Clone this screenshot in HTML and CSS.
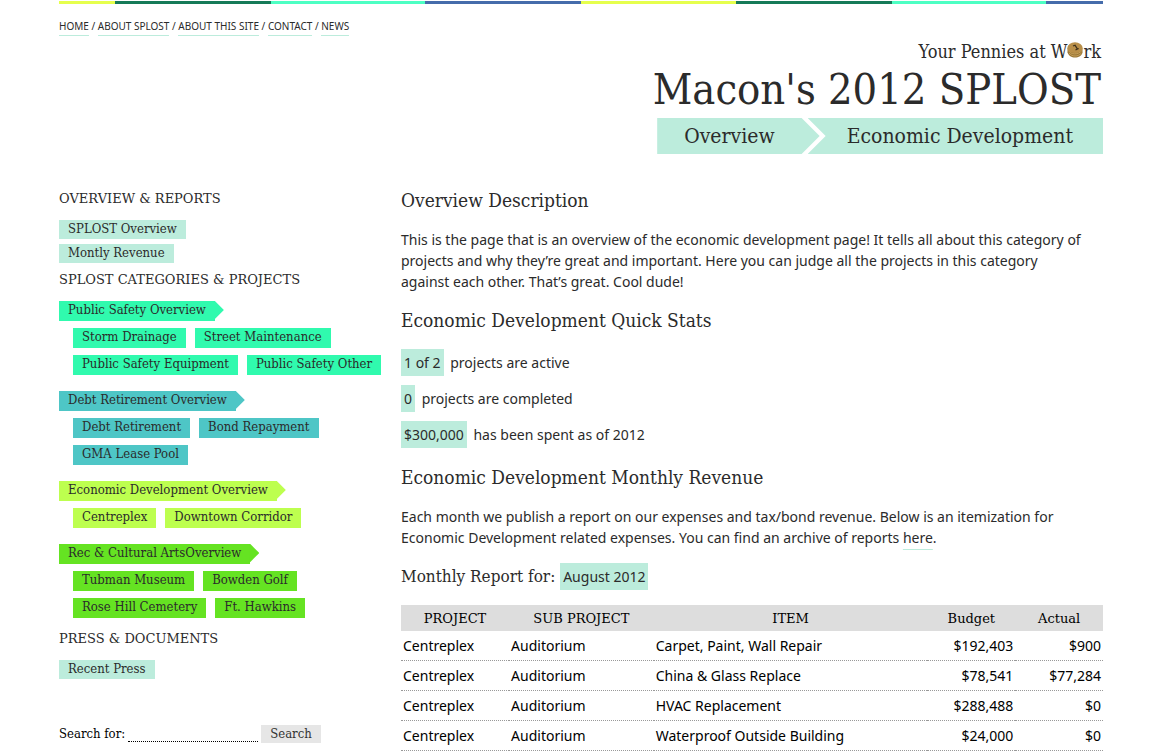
FILE: index.html
```html
<!DOCTYPE html>
<html lang="en">
<head>
<meta charset="utf-8">
<title>Macon's 2012 SPLOST</title>
<link rel="stylesheet" href="styles.css">
</head>
<body>
<div class="page">
  <div class="stripe"></div>
  <nav class="topnav">
    <a href="#">HOME</a> / <a href="#">ABOUT SPLOST</a> / <a href="#">ABOUT THIS SITE</a> / <a href="#">CONTACT</a> / <a href="#">NEWS</a>
  </nav>
  <header class="masthead">
    <p class="tagline">Your Pennies at W<svg class="coin" viewBox="0 0 16 16" aria-hidden="true"><path d="M.500 6v4.500c1 3 4 5 7.500 5s7-2 7.500-5V6z" fill="#9a7737"/><path d="M1.500 8.500c2 4 9 5 13.500 0M2 11c3 4 9 4 12.500 0" fill="none" stroke="#d0aa62" stroke-width=".8"/><ellipse cx="8" cy="5.700" rx="7.600" ry="5.400" fill="#b98f49"/><path d="M6 4l2-.8 2.500 4M8.500 8l3.200-1.500" fill="none" stroke="#3d301b" stroke-width="1.300"/></svg>rk</p>
    <h1 class="title">Macon's 2012 SPLOST</h1>
    <div class="crumbs">
      <a class="crumb crumb-first" href="#">Overview</a>
      <a class="crumb crumb-last" href="#">Economic Development</a>
    </div>
  </header>
  <div class="columns">
    <aside class="sidebar">
      <h2 class="side-title">OVERVIEW &amp; REPORTS</h2>
      <div class="stack">
        <a class="tag" href="#">SPLOST Overview</a>
        <a class="tag" href="#">Montly Revenue</a>
      </div>
      <h2 class="side-title">SPLOST CATEGORIES &amp; PROJECTS</h2>
      <section class="group safety">
        <a class="lead" href="#"><span class="tag">Public Safety Overview</span></a>
        <div class="subs">
          <a class="tag" href="#">Storm Drainage</a>
          <a class="tag" href="#">Street Maintenance</a>
          <a class="tag" href="#">Public Safety Equipment</a>
          <a class="tag" href="#">Public Safety Other</a>
        </div>
      </section>
      <section class="group debt">
        <a class="lead" href="#"><span class="tag">Debt Retirement Overview</span></a>
        <div class="subs">
          <a class="tag" href="#">Debt Retirement</a>
          <a class="tag" href="#">Bond Repayment</a>
          <a class="tag" href="#">GMA Lease Pool</a>
        </div>
      </section>
      <section class="group economic">
        <a class="lead" href="#"><span class="tag">Economic Development Overview</span></a>
        <div class="subs">
          <a class="tag" href="#">Centreplex</a>
          <a class="tag" href="#">Downtown Corridor</a>
        </div>
      </section>
      <section class="group arts">
        <a class="lead" href="#"><span class="tag">Rec &amp; Cultural ArtsOverview</span></a>
        <div class="subs">
          <a class="tag" href="#">Tubman Museum</a>
          <a class="tag" href="#">Bowden Golf</a>
          <a class="tag" href="#">Rose Hill Cemetery</a>
          <a class="tag" href="#">Ft. Hawkins</a>
        </div>
      </section>
      <h2 class="side-title">PRESS &amp; DOCUMENTS</h2>
      <div class="stack">
        <a class="tag" href="#">Recent Press</a>
      </div>
      <form class="search">
        <label for="q">Search for:</label>
        <input id="q" class="search-box" type="text">
        <button class="search-button" type="submit">Search</button>
      </form>
    </aside>
    <main class="content">
      <h2 class="heading">Overview Description</h2>
      <p class="text">This is the page that is an overview of the economic development page! It tells all about this category of projects and why they’re great and important. Here you can judge all the projects in this category against each other. That’s great. Cool dude!</p>
      <h2 class="heading">Economic Development Quick Stats</h2>
      <p class="stat"><span class="mark">1 of 2</span> projects are active</p>
      <p class="stat"><span class="mark">0</span> projects are completed</p>
      <p class="stat"><span class="mark">$300,000</span> has been spent as of 2012</p>
      <h2 class="heading revenue">Economic Development Monthly Revenue</h2>
      <p class="text">Each month we publish a report on our expenses and tax/bond revenue. Below is an itemization for Economic Development related expenses. You can find an archive of reports <a class="link" href="#">here</a>.</p>
      <h3 class="report">Monthly Report for: <span class="mark">August 2012</span></h3>
      <table class="items">
        <thead>
          <tr><th class="c-project">PROJECT</th><th class="c-sub">SUB PROJECT</th><th class="c-item">ITEM</th><th class="c-money">Budget</th><th class="c-money">Actual</th></tr>
        </thead>
        <tbody>
          <tr><td>Centreplex</td><td>Auditorium</td><td>Carpet, Paint, Wall Repair</td><td class="money">$192,403</td><td class="money">$900</td></tr>
          <tr><td>Centreplex</td><td>Auditorium</td><td>China &amp; Glass Replace</td><td class="money">$78,541</td><td class="money">$77,284</td></tr>
          <tr><td>Centreplex</td><td>Auditorium</td><td>HVAC Replacement</td><td class="money">$288,488</td><td class="money">$0</td></tr>
          <tr><td>Centreplex</td><td>Auditorium</td><td>Waterproof Outside Building</td><td class="money">$24,000</td><td class="money">$0</td></tr>
        </tbody>
      </table>
    </main>
  </div>
</div>
</body>
</html>
```
FILE: styles.css
```css
* { box-sizing: border-box; }
body {
  margin: 0;
  background: #fff;
  color: #2b2b2b;
  font: 14px/21px "Noto Sans", "Open Sans", sans-serif;
}
h1, h2, h3, p { margin: 0; font-weight: normal; }
a { color: inherit; text-decoration: none; }

.page { padding: 1px 61px 0 59px; }
.stripe {
  height: 3px;
  background: linear-gradient(90deg, #e6ff4d 0 155px, #157a58 155px 311px, #4dffc3 311px 465px, #456cab 465px 621px) -99px 0 / 621px 3px repeat-x;
}
.topnav { padding-top: 15px; font-size: 10px; line-height: 14px; }
.topnav a { display: inline-block; padding-bottom: 2px; border-bottom: 1px solid #bcecdc; }

.masthead,
.sidebar,
.heading,
.report { font-family: "DejaVu Serif Condensed", "DejaVu Serif", serif; }
.side-title,
.items th { font-family: "DejaVu Serif", serif; }

.masthead { display: flex; flex-direction: column; align-items: flex-end; padding-top: 4px; }
.tagline { padding-right: 2px; font-size: 18px; line-height: 24px; }
.coin { width: 16px; height: 16px; vertical-align: 0; }
.title { padding-right: 2px; font-size: 43px; line-height: 50px; }
.crumbs { display: flex; margin-top: 4px; }
.crumb { height: 36px; background: #bcecdc; font-size: 21px; line-height: 36px; white-space: nowrap; }
.crumb-first {
  padding: 0 45px 0 27px;
  clip-path: polygon(0 0, calc(100% - 18px) 0, 100% 50%, calc(100% - 18px) 100%, 0 100%);
}
.crumb-last {
  margin-left: -12px;
  padding: 0 30px 0 39px;
  clip-path: polygon(0 0, 100% 0, 100% 100%, 0 100%, 18px 50%);
}

.columns { display: flex; gap: 10px; padding-top: 36px; }
.sidebar { flex: 0 0 332px; font-size: 13px; }
.side-title { padding-bottom: 13px; font-size: 13px; line-height: 17px; }
.stack { display: flex; flex-direction: column; align-items: flex-start; gap: 5px; margin-bottom: 8px; }
.tag { height: 20px; padding: 0 9px; background: #bcecdc; line-height: 18px; white-space: nowrap; }
.stack .tag { height: 19px; }
.group { margin-bottom: 16px; }
.group .tag { background: var(--tone); }
.lead { display: flex; }
.lead::after {
  content: "";
  width: 10px;
  height: 18px;
  margin-left: -1px;
  background: var(--tone);
  clip-path: polygon(0 0, 1px 0, 100% 50%, 1px 100%, 0 100%);
}
.subs { display: flex; flex-wrap: wrap; gap: 7px 9px; padding: 7px 0 0 14px; }
.safety { --tone: #30faae; }
.debt { --tone: #4ec6c6; }
.economic { --tone: #bdff4f; }
.arts { --tone: #65e322; margin-bottom: 12px; }
.search { display: flex; gap: 3px; padding-top: 38px; color: #000; line-height: 18px; }
.search-box { width: 130px; height: 17px; padding: 0; border: 0; border-bottom: 1px dotted #000; outline: 0; background: none; font: inherit; }
.search-button { height: 18px; padding: 0 9px; border: 0; background: #e6e6e6; color: #333; font: inherit; }

.content { flex: 1; min-width: 0; }
.heading { padding-bottom: 19px; font-size: 19px; line-height: 20px; }
.text { padding: 0 16px 18px 0; }
.stat { margin-bottom: 9px; line-height: 27px; }
.mark { display: inline-block; margin-right: 3px; padding: 0 3px; background: #bcecdc; font: 14px/27px "Noto Sans", "Open Sans", sans-serif; }
.revenue { padding-top: 10px; }
.link { text-decoration: underline 1px #bcecdc; text-underline-offset: 6px; }
.report { margin-top: -3px; font-size: 17px; line-height: 27px; }
.items { width: 100%; margin-top: 15px; border-collapse: separate; border-spacing: 0; table-layout: fixed; color: #000; }
.items th { height: 26px; padding: 0 2px; background: #ddd; font-size: 13px; font-weight: normal; }
.items td { height: 30px; padding: 0 2px; border-bottom: 1px dotted #999; white-space: nowrap; }
.items .c-project { width: 15.4%; }
.items .c-sub { width: 20.6%; }
.items .c-item { width: 39%; }
.items .money { text-align: right; }
```
